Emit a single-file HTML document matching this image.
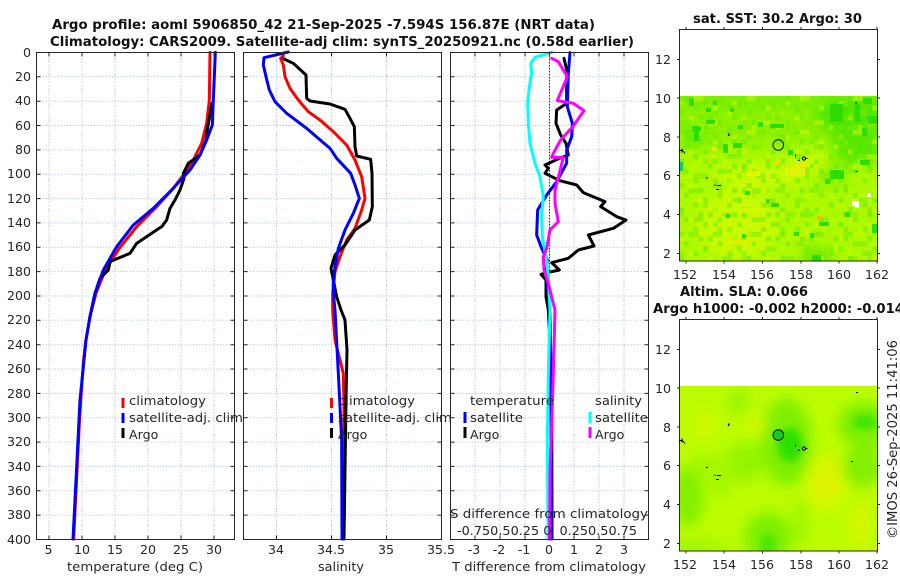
<!DOCTYPE html>
<html><head><meta charset="utf-8"><style>
html,body{margin:0;padding:0;background:#fff;width:900px;height:580px;overflow:hidden}
svg{display:block}
text{font-family:"DejaVu Sans",sans-serif;fill:#262626;font-size:12.6px}
.t{font-weight:bold;fill:#111;font-size:13px}
.e{text-anchor:end}.m{text-anchor:middle}
.l{fill:none;stroke-width:9;stroke-linejoin:round;stroke-linecap:round}
.b{fill:none;stroke:#262626;stroke-width:1}
.g1{fill:none;stroke:#c4cdf0;stroke-width:1;stroke-dasharray:1.5 1.5}
.g2{fill:none;stroke:#ecd0bc;stroke-width:1;stroke-dasharray:1.5 6}
</style></head><body>
<svg width="900" height="580" viewBox="0 0 900 580" xmlns="http://www.w3.org/2000/svg">
<defs>
<path id="hg" d="M0 76.8H198M0 101.2H198M0 125.5H198M0 149.9H198M0 174.2H198M0 198.6H198M0 222.9H198M0 247.3H198M0 271.6H198M0 296H198M0 320.3H198M0 344.7H198M0 369H198M0 393.4H198M0 417.7H198M0 442.1H198M0 466.4H198M0 490.8H198M0 515.1H198"/>
<path id="ht" d="M0 76.8h4M0 101.2h4M0 125.5h4M0 149.9h4M0 174.2h4M0 198.6h4M0 222.9h4M0 247.3h4M0 271.6h4M0 296h4M0 320.3h4M0 344.7h4M0 369h4M0 393.4h4M0 417.7h4M0 442.1h4M0 466.4h4M0 490.8h4M0 515.1h4M198 76.8h-4M198 101.2h-4M198 125.5h-4M198 149.9h-4M198 174.2h-4M198 198.6h-4M198 222.9h-4M198 247.3h-4M198 271.6h-4M198 296h-4M198 320.3h-4M198 344.7h-4M198 369h-4M198 393.4h-4M198 417.7h-4M198 442.1h-4M198 466.4h-4M198 490.8h-4M198 515.1h-4"/>
<filter id="bl" x="-30%" y="-30%" width="160%" height="160%"><feGaussianBlur stdDeviation="6"/></filter>
<filter id="bl2" x="-30%" y="-30%" width="160%" height="160%"><feGaussianBlur stdDeviation="4"/></filter>
<clipPath id="c1"><rect x="679" y="96" width="198" height="165"/></clipPath>
<clipPath id="c2"><rect x="679" y="386" width="198" height="165"/></clipPath>
<pattern id="pa" patternUnits="userSpaceOnUse" x="679" y="96" width="33.81" height="24.25">
<g fill="#66ea00" shape-rendering="crispEdges"><rect x="4.83" y="0" width="4.83" height="4.85"/><rect x="24.15" y="4.85" width="4.83" height="4.85"/><rect x="14.49" y="9.7" width="4.83" height="4.85"/><rect x="0" y="14.55" width="4.83" height="4.85"/><rect x="28.98" y="19.4" width="4.83" height="4.85"/><rect x="19.32" y="19.4" width="4.83" height="4.85"/></g></pattern>
<pattern id="pb" patternUnits="userSpaceOnUse" x="679" y="96" width="53.13" height="33.95">
<g fill="#c8fc00" shape-rendering="crispEdges"><rect x="0" y="4.85" width="4.83" height="4.85"/><rect x="14.49" y="0" width="9.66" height="4.85"/><rect x="33.81" y="9.7" width="4.83" height="4.85"/><rect x="48.3" y="14.55" width="4.83" height="4.85"/><rect x="9.66" y="19.4" width="4.83" height="4.85"/><rect x="28.98" y="24.25" width="9.66" height="4.85"/><rect x="19.32" y="29.1" width="4.83" height="4.85"/><rect x="43.47" y="29.1" width="4.83" height="4.85"/></g></pattern>
<pattern id="pc" patternUnits="userSpaceOnUse" x="679" y="96" width="62.79" height="43.65">
<g fill="#7cec00" shape-rendering="crispEdges"><rect x="9.66" y="4.85" width="9.66" height="4.85"/><rect x="38.64" y="0" width="4.83" height="9.7"/><rect x="53.13" y="14.55" width="9.66" height="4.85"/><rect x="24.15" y="19.4" width="4.83" height="4.85"/><rect x="0" y="24.25" width="4.83" height="9.7"/><rect x="43.47" y="29.1" width="9.66" height="4.85"/><rect x="14.49" y="33.95" width="9.66" height="4.85"/><rect x="33.81" y="38.8" width="4.83" height="4.85"/></g></pattern>
</defs>

<!-- panel grids -->
<g transform="translate(36.5,0)"><use href="#hg" class="g1"/><path class="g1" d="M12.5 52V539M45.5 52V539M78.5 52V539M111.5 52V539M144.5 52V539M177.5 52V539"/><path class="g2" d="M12.5 52V539M45.5 52V539M78.5 52V539M111.5 52V539M144.5 52V539M177.5 52V539"/></g>
<g transform="translate(243.5,0)"><use href="#hg" class="g1"/><path class="g1" d="M33 52V539M88 52V539M143 52V539"/><path class="g2" d="M33 52V539M88 52V539M143 52V539"/></g>
<g transform="translate(450.5,0)"><use href="#hg" class="g1"/><path class="g1" d="M24.5 52V539M49.5 52V539M74.5 52V539M99 52V539M123.5 52V539M148.5 52V539M173.5 52V539"/><path class="g2" d="M24.5 52V539M49.5 52V539M74.5 52V539M99 52V539M123.5 52V539M148.5 52V539M173.5 52V539"/></g>

<!-- panel 1 curves -->
<g transform="scale(.33333)">
<polyline class="l" stroke="#ff0000" points="630,157 628,300 620,370 605,430 580,480 550,525 520,565 470,620 410,680 358,745 315,812 288,880 270,950 257,1025 250,1090 239,1250 221,1617"/>
<polyline class="l" stroke="#000" points="636,310 620,400 618,420 600,465 565,490 550,520 552,535 540,570 525,600 510,625 500,660 485,680 440,710 410,730 390,760 330,785 325,810 300,835 285,880 272,940 268,960"/>
<polyline class="l" stroke="#0000ff" points="646,157 640,300 637,375 620,420 600,465 570,510 515,570 460,625 400,675 350,740 310,810 285,880 270,950 258,1020 252,1080 240,1200 228,1440 219,1617"/>
</g>
<!-- panel 2 curves -->
<g transform="translate(240,40) scale(.33333)">
<polyline class="l" stroke="#ff0000" points="130,48 122,55 130,75 135,110 150,145 175,180 205,215 240,240 280,275 320,315 345,360 365,410 375,475 365,510 345,565 320,600 300,650 285,695 278,760 278,810 285,900 310,1000 312,1100 309,1497"/>
<polyline class="l" stroke="#000" points="132,57 160,70 198,105 200,175 210,183 270,192 315,208 330,235 343,260 345,320 350,348 392,358 396,400 397,500 388,540 345,570 315,615 285,645 273,685 280,720 290,770 303,810 315,840 321,930 318,1080 312,1497"/>
<polyline class="l" stroke="#0000ff" points="145,36 72,53 70,75 78,110 88,150 105,185 140,220 200,265 270,325 290,355 332,400 345,435 358,475 340,520 315,570 295,625 285,680 280,730 282,780 285,810 295,1000 305,1200 306,1497"/>
</g>
<!-- panel 3 curves -->
<path d="M549.5 53V300" stroke="#333" stroke-width="1" stroke-dasharray="1.5 1.5" fill="none"/>
<g transform="translate(440,40) scale(.33333)">
<polyline class="l" stroke="#000" points="372,55 380,90 380,190 350,210 348,250 362,285 378,310 385,345 358,355 315,375 325,385 315,400 360,422 410,435 430,458 495,485 482,500 530,530 558,540 520,565 445,585 462,618 415,630 385,655 335,668 358,690 325,697 303,703 318,720 318,770 325,810 335,1000 336,1497"/>
<polyline class="l" stroke="#0000ff" points="390,38 385,100 382,200 397,250 395,290 380,330 380,370 350,425 320,465 293,510 290,585 305,625 322,660 318,700 325,760 330,810 333,1000 334,1497"/>
<polyline class="l" stroke="#00ffff" points="335,37 285,52 272,70 275,100 268,140 263,185 265,250 270,310 285,370 300,410 310,470 305,520 307,590 318,650 325,710 330,810 325,1000 322,1200 324,1497"/>
<polyline class="l" stroke="#ff00ff" points="335,55 355,65 382,110 352,182 400,190 432,212 400,258 362,300 340,340 335,352 370,352 358,400 345,450 345,490 355,545 330,570 320,625 310,650 312,690 325,730 335,770 345,810 340,1000 330,1300 329,1497"/>
</g>

<!-- panel boxes & ticks -->
<g transform="translate(36.5,0)"><rect class="b" x="0" y="52.5" width="198" height="487"/><use href="#ht" class="b"/><path class="b" d="M12.5 52.5v4M45.5 52.5v4M78.5 52.5v4M111.5 52.5v4M144.5 52.5v4M177.5 52.5v4M12.5 539.5v-4M45.5 539.5v-4M78.5 539.5v-4M111.5 539.5v-4M144.5 539.5v-4M177.5 539.5v-4"/></g>
<g transform="translate(243.5,0)"><rect class="b" x="0" y="52.5" width="198" height="487"/><use href="#ht" class="b"/><path class="b" d="M33 52.5v4M88 52.5v4M143 52.5v4M33 539.5v-4M88 539.5v-4M143 539.5v-4"/></g>
<g transform="translate(450.5,0)"><rect class="b" x="0" y="52.5" width="198" height="487"/><use href="#ht" class="b"/><path class="b" d="M24.5 52.5v4M49.5 52.5v4M74.5 52.5v4M99 52.5v4M123.5 52.5v4M148.5 52.5v4M173.5 52.5v4M24.5 539.5v-4M49.5 539.5v-4M74.5 539.5v-4M99 539.5v-4M123.5 539.5v-4M148.5 539.5v-4M173.5 539.5v-4"/></g>

<!-- titles -->
<text class="t" x="52" y="29" textLength="543" lengthAdjust="spacingAndGlyphs">Argo profile: aoml 5906850_42 21-Sep-2025 -7.594S 156.87E (NRT data)</text>
<text class="t" x="50" y="46" textLength="584" lengthAdjust="spacingAndGlyphs">Climatology: CARS2009. Satellite-adj clim: synTS_20250921.nc (0.58d earlier)</text>

<!-- y labels -->
<g>
<text class="e" x="31" y="57">0</text><text class="e" x="31" y="81">20</text><text class="e" x="31" y="105">40</text><text class="e" x="31" y="130">60</text><text class="e" x="31" y="154">80</text><text class="e" x="31" y="178">100</text><text class="e" x="31" y="203">120</text><text class="e" x="31" y="227">140</text><text class="e" x="31" y="251">160</text><text class="e" x="31" y="276">180</text><text class="e" x="31" y="300">200</text><text class="e" x="31" y="324">220</text><text class="e" x="31" y="349">240</text><text class="e" x="31" y="373">260</text><text class="e" x="31" y="398">280</text><text class="e" x="31" y="422">300</text><text class="e" x="31" y="446">320</text><text class="e" x="31" y="471">340</text><text class="e" x="31" y="495">360</text><text class="e" x="31" y="519">380</text><text class="e" x="31" y="544">400</text>
</g>
<!-- x labels -->
<g>
<text class="m" x="48.5" y="554">5</text><text class="m" x="82" y="554">10</text><text class="m" x="115" y="554">15</text><text class="m" x="148" y="554">20</text><text class="m" x="181" y="554">25</text><text class="m" x="214" y="554">30</text>
<text class="m" x="276" y="554">34</text><text class="m" x="331" y="554">34.5</text><text class="m" x="386" y="554">35</text><text class="m" x="441" y="554">35.5</text>
<text class="m" x="474" y="554">-3</text><text class="m" x="499" y="554">-2</text><text class="m" x="524" y="554">-1</text><text class="m" x="549" y="554">0</text><text class="m" x="574" y="554">1</text><text class="m" x="599" y="554">2</text><text class="m" x="624" y="554">3</text>
<text x="67" y="571" textLength="136" lengthAdjust="spacingAndGlyphs">temperature (deg C)</text>
<text x="318" y="571" textLength="46" lengthAdjust="spacingAndGlyphs">salinity</text>
<text x="452" y="571" textLength="194" lengthAdjust="spacingAndGlyphs">T difference from climatology</text>
</g>

<!-- legends -->
<g fill="none" stroke-width="3">
<path d="M123 398v10" stroke="#ff0000"/><path d="M123 413v10" stroke="#0000ff"/><path d="M123 428v10" stroke="#000"/>
<path d="M331.500 398v10" stroke="#ff0000"/><path d="M331.500 413v10" stroke="#0000ff"/><path d="M331.500 428v10" stroke="#000"/>
<path d="M465 412v11" stroke="#0000ff"/><path d="M465 427v11" stroke="#000"/>
<path d="M590 412v11" stroke="#00ffff"/><path d="M590 427v11" stroke="#ff00ff"/>
</g>
<text x="129" y="405" textLength="77" lengthAdjust="spacingAndGlyphs">climatology</text>
<text x="129" y="422" textLength="114" lengthAdjust="spacingAndGlyphs">satellite-adj. clim</text>
<text x="129" y="439">Argo</text>
<text x="338" y="405" textLength="77" lengthAdjust="spacingAndGlyphs">climatology</text>
<text x="338" y="422" textLength="114" lengthAdjust="spacingAndGlyphs">satellite-adj. clim</text>
<text x="338" y="439">Argo</text>
<text x="470" y="405" textLength="84" lengthAdjust="spacingAndGlyphs">temperature</text>
<text x="595" y="405" textLength="47" lengthAdjust="spacingAndGlyphs">salinity</text>
<text x="470" y="422" textLength="53" lengthAdjust="spacingAndGlyphs">satellite</text>
<text x="470" y="439">Argo</text>
<text x="595" y="422" textLength="53" lengthAdjust="spacingAndGlyphs">satellite</text>
<text x="595" y="439">Argo</text>
<text x="450" y="518" textLength="198" lengthAdjust="spacingAndGlyphs">S difference from climatology</text>
<text x="457" y="535" textLength="180" lengthAdjust="spacingAndGlyphs" xml:space="preserve">-0.750.50.25 0  0.250.50.75</text>

<!-- map 1 -->
<rect x="679" y="96" width="198" height="165" fill="#acf900" shape-rendering="crispEdges"/>
<g clip-path="url(#c1)">
<g filter="url(#bl)">
<rect x="670" y="88" width="220" height="26" fill="#7cee00"/>
<rect x="670" y="118" width="220" height="22" fill="#8af000"/>
<rect x="670" y="140" width="130" height="14" fill="#9cf500"/>
<ellipse cx="850" cy="116" rx="34" ry="20" fill="#50e500"/>
<ellipse cx="857" cy="145" rx="26" ry="20" fill="#58e800"/>
<ellipse cx="692" cy="137" rx="12" ry="9" fill="#5ce800"/>
<ellipse cx="833" cy="175" rx="14" ry="9" fill="#6cec00"/>
<ellipse cx="817" cy="258" rx="16" ry="12" fill="#70ec00"/>
<ellipse cx="737" cy="225" rx="40" ry="34" fill="#c8fa00"/>
<ellipse cx="757" cy="177" rx="40" ry="14" fill="#c8fa00"/>
<ellipse cx="803" cy="165" rx="24" ry="9" fill="#ccf900"/>
</g>
<rect x="679" y="96" width="198" height="165" fill="url(#pa)" opacity=".55"/>
<rect x="679" y="96" width="198" height="165" fill="url(#pb)" opacity=".5"/>
<rect x="679" y="96" width="198" height="165" fill="url(#pc)" opacity=".6"/>
<g shape-rendering="crispEdges">
<rect x="679" y="162" width="4" height="9" fill="#11cc55"/>
<g fill="#2edc00">
<rect x="692" y="126" width="9" height="5"/><rect x="694" y="131" width="5" height="10"/><rect x="689" y="98" width="5" height="8"/><rect x="706" y="108" width="5" height="4"/><rect x="713" y="101" width="4" height="4"/><rect x="706" y="120" width="9" height="4"/><rect x="730" y="108" width="4" height="4"/><rect x="738" y="125" width="5" height="4"/><rect x="733" y="143" width="9" height="5"/><rect x="723" y="144" width="5" height="9"/><rect x="758" y="122" width="5" height="5"/><rect x="770" y="124" width="14" height="4"/><rect x="830" y="170" width="14" height="9"/><rect x="825" y="179" width="5" height="5"/><rect x="830" y="104" width="13" height="18"/><rect x="855" y="104" width="5" height="18"/><rect x="863" y="98" width="9" height="6"/><rect x="868" y="116" width="9" height="8"/><rect x="862" y="128" width="5" height="8"/><rect x="860" y="160" width="10" height="5"/><rect x="745" y="191" width="5" height="4"/><rect x="726" y="214" width="4" height="4"/><rect x="742" y="234" width="4" height="4"/><rect x="771" y="203" width="8" height="4"/><rect x="766" y="199" width="4" height="4"/><rect x="794" y="232" width="5" height="4"/><rect x="810" y="233" width="4" height="5"/><rect x="819" y="222" width="10" height="4"/><rect x="845" y="212" width="5" height="5"/><rect x="812" y="255" width="9" height="6"/><rect x="872" y="224" width="5" height="9"/><rect x="788" y="150" width="5" height="5"/></g>
<rect x="817" y="216" width="4" height="4" fill="#ffb000"/>
<rect x="712" y="147" width="5" height="4" fill="#e8e800"/>
<rect x="775" y="162" width="4" height="4" fill="#f0dc00"/>
<rect x="796" y="163" width="14" height="4" fill="#e8f000"/>
<rect x="785" y="168" width="20" height="8" fill="#e0f400"/>
<rect x="746" y="171" width="14" height="5" fill="#e4f400"/>
<rect x="725" y="240" width="24" height="5" fill="#d8f400"/>
<rect x="738" y="208" width="28" height="5" fill="#d0f800"/>
<rect x="852" y="201" width="7" height="5" fill="#fff"/><rect x="855" y="206" width="4" height="2" fill="#fff"/>
<rect x="867" y="193" width="4" height="4" fill="#fff"/>
</g>
</g>
<rect x="679.500" y="29.500" width="198" height="231.500" class="b"/>
<path class="b" d="M686 29.500v-2.500M724 29.500v-2.500M762.500 29.500v-2.500M801 29.500v-2.500M839 29.500v-2.500M877 29.500v-2.500M686 261v2.500M724 261v2.500M762.500 261v2.500M801 261v2.500M839 261v2.500M877 261v2.500M679.500 59.500h-2.500M679.500 98h-2.500M679.500 137h-2.500M679.500 175.500h-2.500M679.500 214.500h-2.500M679.500 253.500h-2.500M877.500 59.500h2.500M877.500 98h2.500M877.500 137h2.500M877.500 175.500h2.500M877.500 214.500h2.500M877.500 253.500h2.500"/>
<text class="t" x="693" y="23" textLength="169" lengthAdjust="spacingAndGlyphs">sat. SST: 30.2 Argo: 30</text>
<text class="e" x="671" y="64">12</text><text class="e" x="671" y="103">10</text><text class="e" x="671" y="142">8</text><text class="e" x="671" y="180">6</text><text class="e" x="671" y="219">4</text><text class="e" x="671" y="258">2</text>
<text class="m" x="685" y="279">152</text><text class="m" x="724" y="279">154</text><text class="m" x="762" y="279">156</text><text class="m" x="801" y="279">158</text><text class="m" x="839" y="279">160</text><text class="m" x="877" y="279">162</text>

<!-- map 2 -->
<rect x="679" y="386" width="198" height="165" fill="#bcfc00" shape-rendering="crispEdges"/>
<g clip-path="url(#c2)">
<g filter="url(#bl)">
<ellipse cx="786" cy="442" rx="26" ry="44" fill="#80f000"/>
<ellipse cx="864" cy="425" rx="26" ry="24" fill="#80f000"/>
<ellipse cx="863" cy="467" rx="20" ry="20" fill="#84f000"/>
<ellipse cx="688" cy="497" rx="16" ry="30" fill="#84f000"/>
<ellipse cx="745" cy="462" rx="18" ry="20" fill="#94f400"/>
<ellipse cx="738" cy="401" rx="10" ry="12" fill="#94f400"/>
<ellipse cx="768" cy="538" rx="24" ry="26" fill="#80f000"/>
<ellipse cx="800" cy="522" rx="9" ry="22" fill="#a0f600"/>
<ellipse cx="705" cy="465" rx="14" ry="9" fill="#a0f600"/>
<ellipse cx="720" cy="475" rx="14" ry="22" fill="#a4f800"/>
<ellipse cx="690" cy="548" rx="40" ry="8" fill="#a0f600"/>
<ellipse cx="826" cy="483" rx="20" ry="28" fill="#d6f600"/>
<ellipse cx="860" cy="525" rx="10" ry="24" fill="#d4f600"/>
<ellipse cx="705" cy="425" rx="14" ry="14" fill="#ccf900"/>
<ellipse cx="756" cy="425" rx="10" ry="10" fill="#d0f800"/>
</g>
<g filter="url(#bl2)">
<ellipse cx="790" cy="445" rx="13" ry="17" fill="#2ee000"/>
<ellipse cx="865" cy="422" rx="13" ry="7" fill="#3ae400"/>
<ellipse cx="768" cy="544" rx="8" ry="12" fill="#4ce800"/>
<ellipse cx="828" cy="485" rx="7" ry="11" fill="#e0f000"/>
</g>
</g>
<rect x="679.500" y="319.500" width="198" height="231.500" class="b"/>
<path class="b" d="M686 319.500v-2.500M724 319.500v-2.500M762.500 319.500v-2.500M801 319.500v-2.500M839 319.500v-2.500M877 319.500v-2.500M686 551v2.500M724 551v2.500M762.500 551v2.500M801 551v2.500M839 551v2.500M877 551v2.500M679.500 349.500h-2.500M679.500 388h-2.500M679.500 427h-2.500M679.500 465.500h-2.500M679.500 504.500h-2.500M679.500 543.500h-2.500M877.500 349.500h2.500M877.500 388h2.500M877.500 427h2.500M877.500 465.500h2.500M877.500 504.500h2.500M877.500 543.500h2.500"/>
<text class="t" x="680" y="296" textLength="128" lengthAdjust="spacingAndGlyphs">Altim. SLA: 0.066</text>
<text class="t" x="653" y="313" textLength="251" lengthAdjust="spacingAndGlyphs">Argo h1000: -0.002 h2000: -0.014</text>
<text class="e" x="671" y="354">12</text><text class="e" x="671" y="393">10</text><text class="e" x="671" y="432">8</text><text class="e" x="671" y="470">6</text><text class="e" x="671" y="509">4</text><text class="e" x="671" y="548">2</text>
<text class="m" x="685" y="569">152</text><text class="m" x="724" y="569">154</text><text class="m" x="762" y="569">156</text><text class="m" x="801" y="569">158</text><text class="m" x="839" y="569">160</text><text class="m" x="877" y="569">162</text>
<text transform="translate(897,539) rotate(-90)" x="0" y="0" style="font-size:13.4px" textLength="199" lengthAdjust="spacingAndGlyphs">©IMOS 26-Sep-2025 11:41:06</text>

<!-- coast + circle on map 1 -->
<g fill="none" stroke="#000" stroke-width="1">
<circle cx="778.300" cy="145" r="5.300" stroke="#111"/>
<path d="M679 150.500h4M682 148.500v4M683 151l2 2.500"/>
<path d="M728.700 133.500v2.500" stroke-width="1.500"/>
<path d="M795.500 154.500v2M798 160.500l2-.5"/><circle cx="804" cy="158.500" r="1.600"/><path d="M806 158.500h1.500"/>
<path d="M706 178h2M715 184.500v1.500M717 185.500h4M716 189.500h3M855.500 171.500h2M855 103h2"/>
</g>
<g fill="none" stroke="#000" stroke-width="1">
<circle cx="778.300" cy="435" r="5.300" fill="#14cc22" stroke="#111"/>
<path d="M679 440.500h4M682 438.500v4M683 441l2 2.500"/>
<path d="M728.700 423.500v2.500" stroke-width="1.500"/>
<path d="M795.500 444.500v2M798 450.500l2-.5"/><circle cx="804" cy="448.500" r="1.600"/><path d="M806 448.500h1.500"/>
<path d="M706 467.500h2M715 474.500v1.500M717 475.500h4M716 479.500h3M851 461.500h2M856 392.500h2"/>
</g>
</svg>
</body></html>
